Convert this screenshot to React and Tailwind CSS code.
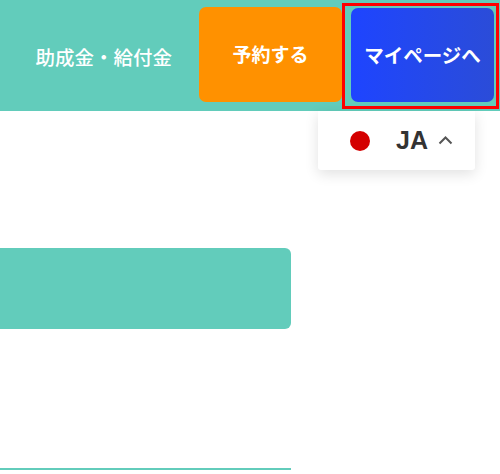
export default function App() {
  return (
    <div
      className="relative w-[500px] h-[474px] overflow-hidden bg-white"
      style={{ fontFamily: '"Noto Sans CJK JP", "Noto Sans", sans-serif' }}
    >
      {/* header */}
      <header className="flex h-[111px] items-start justify-end bg-[#62ccbb] pr-[6px]">
        <a className="mr-[27px] mt-[43px] text-[19.5px] font-medium leading-[28px] text-white">
          助成金・給付金
        </a>
        <a className="mt-[7px] flex h-[95px] w-[143px] items-center justify-center rounded-[7px] bg-[#ff9100] text-[19px] font-bold text-white">
          予約する
        </a>
        <div className="relative ml-[9px] mt-[8px]">
          <a className="flex h-[94px] w-[143px] items-center justify-center rounded-[7px] bg-gradient-to-r from-[#1e44ff] to-[#2b4cd8] text-[19.5px] font-bold text-white">
            マイページへ
          </a>
          <div className="pointer-events-none absolute -left-[9px] -top-[5px] -right-[5px] -bottom-[7px] border-[3px] border-[#ff0000]" />
        </div>
      </header>

      {/* language menu */}
      <div className="absolute left-[318px] top-[111px] flex h-[59px] w-[157px] items-center rounded-b-[3px] bg-white pl-[32px] shadow-[0_4px_14px_rgba(0,0,0,0.12)]">
        <span className="h-[20px] w-[20px] rounded-full bg-[#d40000]" />
        <span
          className="ml-[26px] text-[25px] font-bold leading-none text-[#333333]"
          style={{ fontFamily: '"Liberation Sans", Arial, sans-serif' }}
        >
          JA
        </span>
        <svg className="ml-[10px]" width="15" height="9" viewBox="0 0 15 9" fill="none">
          <path d="M1.5 7.5 L7.5 1.5 L13.5 7.5" stroke="#555555" strokeWidth="2" />
        </svg>
      </div>

      {/* content */}
      <div className="pt-[137px]">
        <div className="h-[81px] w-[291px] rounded-r-[6px] bg-[#62ccbb]" />
        <div className="mt-[139px] h-[2px] w-[291px] bg-[#62ccbb]" />
      </div>
    </div>
  );
}
